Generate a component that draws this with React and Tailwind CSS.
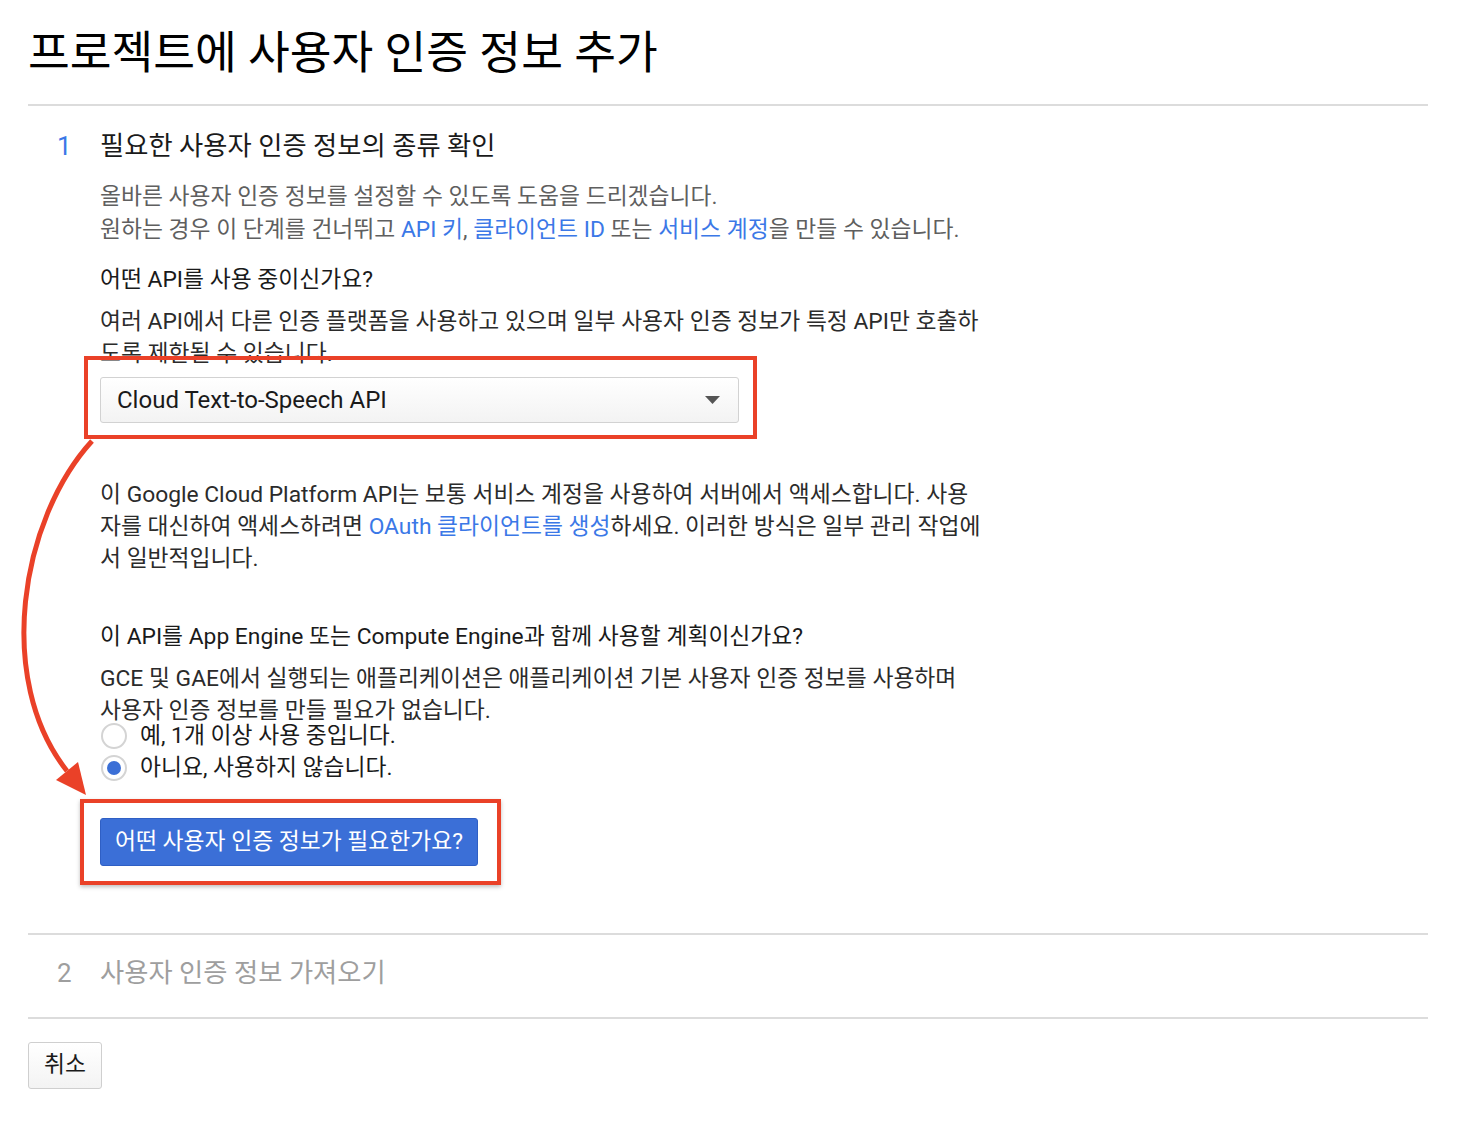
import React, { useState } from "react";

const FONT = "font-['Roboto','Noto_Sans_CJK_KR',sans-serif]";

const Link = ({ children }) => (
  <a href="#" className="text-[#3b78e7]">
    {children}
  </a>
);

const Radio = ({ checked, label, onClick }) => (
  <label onClick={onClick} className="flex items-center h-[32px] cursor-pointer">
    <span className="w-[26px] h-[26px] rounded-full border-2 border-[#d4d4d4] bg-white flex items-center justify-center">
      {checked && <span className="w-[14px] h-[14px] rounded-full bg-[#3b6fd6]" />}
    </span>
    <span className="ml-[13px] text-[22.8px] leading-[32px] text-[#1a1a1a]">{label}</span>
  </label>
);

const App = () => {
  const [usesEngine, setUsesEngine] = useState(false);

  return (
    <div className={`relative min-h-screen bg-white pl-[28px] pr-[44px] pt-[29px] pb-[40px] ${FONT}`}>
      {/* annotation arrow */}
      <svg
        className="absolute top-0 left-0 pointer-events-none"
        width="1472"
        height="1134"
        viewBox="0 0 1472 1134"
      >
        <path
          d="M92 441 C 20 520, -5 680, 67 771"
          fill="none"
          stroke="#ea4128"
          strokeWidth="5"
        />
        <polygon points="86,795 56,780 78,762" fill="#ea4128" />
      </svg>

      <h1 className="text-[45.4px] leading-[50px] text-black whitespace-nowrap">
        프로젝트에 사용자 인증 정보 추가
      </h1>
      <div className="mt-[25px] h-[2px] bg-[#dcdcdc]" />

      {/* Step 1 */}
      <section className="pt-[24px] pb-[67px]">
        <div className="flex items-center">
          <div className="w-[72px] pl-[29px] text-[26px] leading-[32px] text-[#3b78e7]">1</div>
          <h2 className="text-[26.3px] leading-[32px] text-[#1a1a1a] whitespace-nowrap">
            필요한 사용자 인증 정보의 종류 확인
          </h2>
        </div>

        <div className="pl-[72px]">
          <p className="mt-[18px] text-[22.8px] leading-[33px] text-[#5f5f5f] whitespace-nowrap">
            올바른 사용자 인증 정보를 설정할 수 있도록 도움을 드리겠습니다.
            <br />
            원하는 경우 이 단계를 건너뛰고 <Link>API 키</Link>, <Link>클라이언트 ID</Link> 또는{" "}
            <Link>서비스 계정</Link>을 만들 수 있습니다.
          </p>

          <h3 className="mt-[18px] text-[22.8px] leading-[32px] text-[#1a1a1a] whitespace-nowrap">
            어떤 API를 사용 중이신가요?
          </h3>
          <p className="mt-[10px] text-[22.8px] leading-[32px] text-[#2b2b2b] whitespace-nowrap">
            여러 API에서 다른 인증 플랫폼을 사용하고 있으며 일부 사용자 인증 정보가 특정 API만 호출하
            <br />
            도록 제한될 수 있습니다.
          </p>

          <div className="relative mt-[7px] w-[639px]">
            <div className="flex items-center justify-between h-[46px] pl-[16px] pr-[18px] border border-[#d2d2d2] rounded-[3px] bg-gradient-to-b from-white to-[#f3f3f3]">
              <span className="text-[24px] text-[#1a1a1a]">Cloud Text-to-Speech API</span>
              <svg width="15" height="8" viewBox="0 0 15 8">
                <polygon points="0,0 15,0 7.5,8" fill="#555" />
              </svg>
            </div>
            <div className="absolute -left-[16px] -right-[18px] -top-[21px] -bottom-[16px] border-4 border-[#ea4128] pointer-events-none" />
          </div>

          <p className="mt-[56px] text-[22.8px] leading-[32px] text-[#2b2b2b] whitespace-nowrap">
            이 Google Cloud Platform API는 보통 서비스 계정을 사용하여 서버에서 액세스합니다. 사용
            <br />
            자를 대신하여 액세스하려면 <Link>OAuth 클라이언트를 생성</Link>하세요. 이러한 방식은 일부 관리 작업에
            <br />
            서 일반적입니다.
          </p>

          <h3 className="mt-[46px] text-[22.8px] leading-[32px] text-[#1a1a1a] whitespace-nowrap">
            이 API를 App Engine 또는 Compute Engine과 함께 사용할 계획이신가요?
          </h3>
          <p className="mt-[10px] text-[22.8px] leading-[32px] text-[#2b2b2b] whitespace-nowrap">
            GCE 및 GAE에서 실행되는 애플리케이션은 애플리케이션 기본 사용자 인증 정보를 사용하며
            <br />
            사용자 인증 정보를 만들 필요가 없습니다.
          </p>

          <div className="-mt-[7px] pl-[1px]">
            <Radio checked={usesEngine} label="예, 1개 이상 사용 중입니다." onClick={() => setUsesEngine(true)} />
            <Radio checked={!usesEngine} label="아니요, 사용하지 않습니다." onClick={() => setUsesEngine(false)} />
          </div>

          <div className="relative mt-[34px] inline-block">
            <button className="h-[48px] px-[14px] rounded-[3px] bg-[#3b6fd7] border border-[#2f5fc4] text-white text-[22.8px] whitespace-nowrap">
              어떤 사용자 인증 정보가 필요한가요?
            </button>
            <div className="absolute -left-[20px] -right-[23px] -top-[19px] -bottom-[19px] border-4 border-[#ea4128] shadow-[0_2px_4px_rgba(0,0,0,0.25)] pointer-events-none" />
          </div>
        </div>
      </section>

      <div className="h-[2px] bg-[#dcdcdc]" />

      {/* Step 2 */}
      <section className="flex items-center pt-[22px] pb-[28px]">
        <div className="w-[72px] pl-[29px] text-[26px] leading-[32px] text-[#9e9e9e]">2</div>
        <h2 className="text-[26.3px] leading-[32px] text-[#9e9e9e] whitespace-nowrap">사용자 인증 정보 가져오기</h2>
      </section>

      <div className="h-[2px] bg-[#dcdcdc]" />

      <button className="mt-[23px] h-[47px] px-[15px] rounded-[3px] border border-[#cfcfcf] bg-gradient-to-b from-white to-[#f3f3f3] text-[22.8px] text-[#1a1a1a]">
        취소
      </button>
    </div>
  );
};

export default App;
